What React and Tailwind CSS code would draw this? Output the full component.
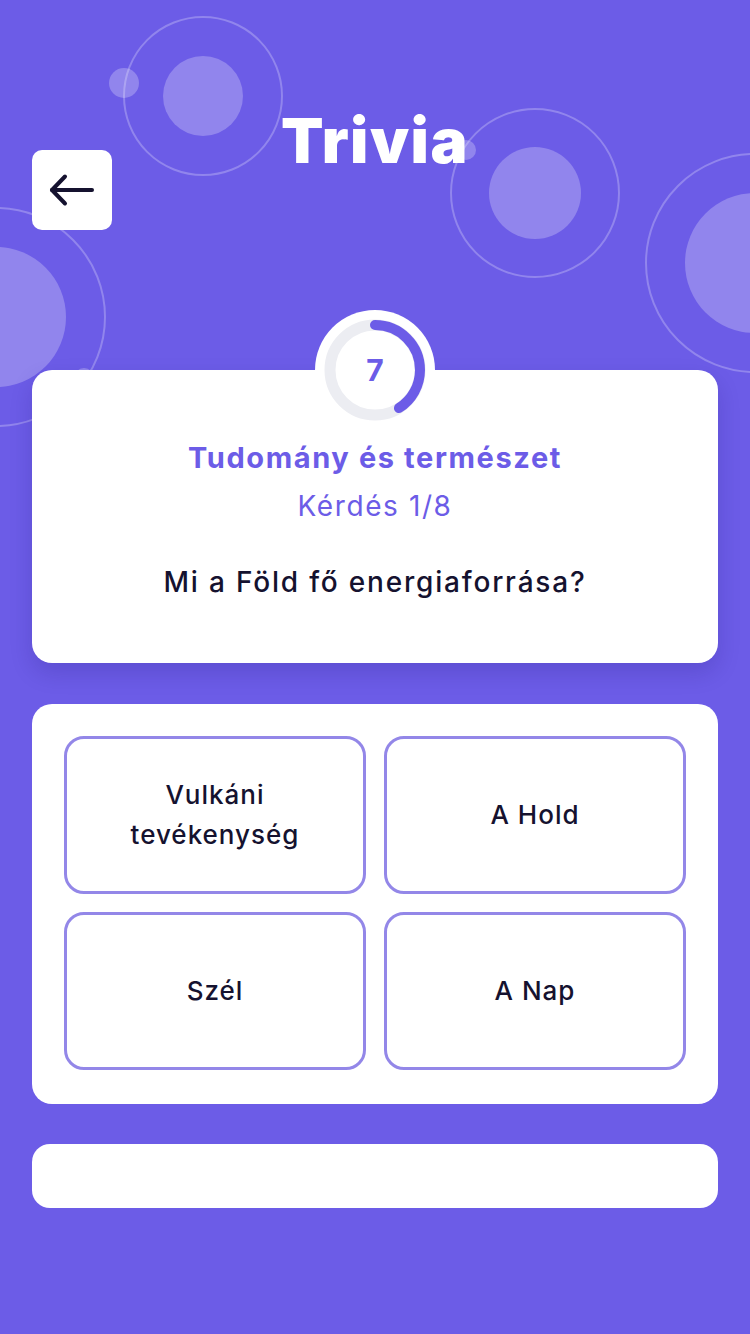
const ANSWERS = ['Vulkáni tevékenység', 'A Hold', 'Szél', 'A Nap']

// háttér díszkörök: középpont, gyűrű sugár, kitöltött sugár
const ORBITS = [
  { cx: 203, cy: 96, ring: 80, fill: 40 },
  { cx: 535, cy: 193, ring: 85, fill: 46 },
  { cx: 755, cy: 263, ring: 110, fill: 70 },
  { cx: -4, cy: 317, ring: 110, fill: 70 },
]
const DOTS = [
  { cx: 124, cy: 83, r: 15 },
  { cx: 466, cy: 150, r: 10 },
  { cx: 84, cy: 378, r: 10 },
]

function Timer({ value = 7, progress = 0.41 }) {
  const r = 45
  const c = 2 * Math.PI * r
  return (
    <div className="w-[120px] h-[120px] rounded-full bg-white flex items-center justify-center relative">
      <svg width="120" height="120" viewBox="0 0 120 120" className="absolute inset-0 -rotate-90">
        <circle cx="60" cy="60" r={r} fill="none" stroke="#ecedf2" strokeWidth="11" />
        <circle cx="60" cy="60" r={r} fill="none" stroke="#6c5ce7" strokeWidth="10" strokeLinecap="round"
          strokeDasharray={`${c * progress} ${c}`} />
      </svg>
      <span className="relative text-[30px] font-bold text-[#6c5ce7] leading-none">{value}</span>
    </div>
  )
}

export default function App() {
  return (
    <div className="relative w-full min-h-[1334px] overflow-hidden bg-[#6c5ce7] font-['Inter',sans-serif]">
      {/* dekoráció */}
      {ORBITS.map((o, i) => (
        <div key={i}>
          <div className="absolute rounded-full border-2 border-white/25"
            style={{ left: o.cx - o.ring, top: o.cy - o.ring, width: o.ring * 2, height: o.ring * 2 }} />
          <div className="absolute rounded-full bg-white/25"
            style={{ left: o.cx - o.fill, top: o.cy - o.fill, width: o.fill * 2, height: o.fill * 2 }} />
        </div>
      ))}
      {DOTS.map((d, i) => (
        <div key={i} className="absolute rounded-full bg-white/25"
          style={{ left: d.cx - d.r, top: d.cy - d.r, width: d.r * 2, height: d.r * 2 }} />
      ))}

      <div className="relative px-8">
        {/* fejléc */}
        <div className="flex items-start">
          <button className="mt-[150px] w-20 h-20 rounded-[10px] bg-white flex items-center justify-center shrink-0">
            <svg width="48" height="48" viewBox="0 0 48 48" fill="none" stroke="#15122f" strokeWidth="4"
              strokeLinecap="round" strokeLinejoin="round">
              <path d="M4 24H44" />
              <path d="M17 10.5L4 24L17 37.5" />
            </svg>
          </button>
          <h1 className="flex-1 mt-[103px] text-center text-white text-[62px] leading-[76px] font-black tracking-[1.5px]">
            Trivia
          </h1>
          <div className="w-20 shrink-0" />
        </div>

        {/* kérdés kártya */}
        <div className="relative mt-[140px] bg-white rounded-[20px] shadow-[0_10px_22px_rgba(30,15,110,0.18)] pt-[68px] pb-[61px] text-center">
          <div className="absolute left-1/2 -translate-x-1/2 -top-[60px]">
            <Timer />
          </div>
          <p className="text-[29px] leading-[40px] font-bold tracking-[1.6px] text-[#6c5ce7]">Tudomány és természet</p>
          <p className="mt-2 text-[28px] leading-[40px] tracking-[1.6px] text-[#6c5ce7]">Kérdés 1/8</p>
          <p className="mt-9 text-[28px] leading-[40px] font-medium tracking-[1.8px] text-[#15122f]">Mi a Föld fő energiaforrása?</p>
        </div>

        {/* válaszok */}
        <div className="mt-[41px] bg-white rounded-[20px] px-8 pt-8 pb-[34px] grid grid-cols-2 gap-[18px]">
          {ANSWERS.map(a => (
            <button key={a}
              className="h-[158px] rounded-[20px] border-[3px] border-[#9387e8] bg-white flex items-center justify-center px-10 text-center text-[26px] leading-[40px] font-medium tracking-[1px] text-[#15122f]">
              {a}
            </button>
          ))}
        </div>

        {/* alsó sáv */}
        <div className="mt-10 h-16 bg-white rounded-[18px]" />
      </div>
    </div>
  )
}
